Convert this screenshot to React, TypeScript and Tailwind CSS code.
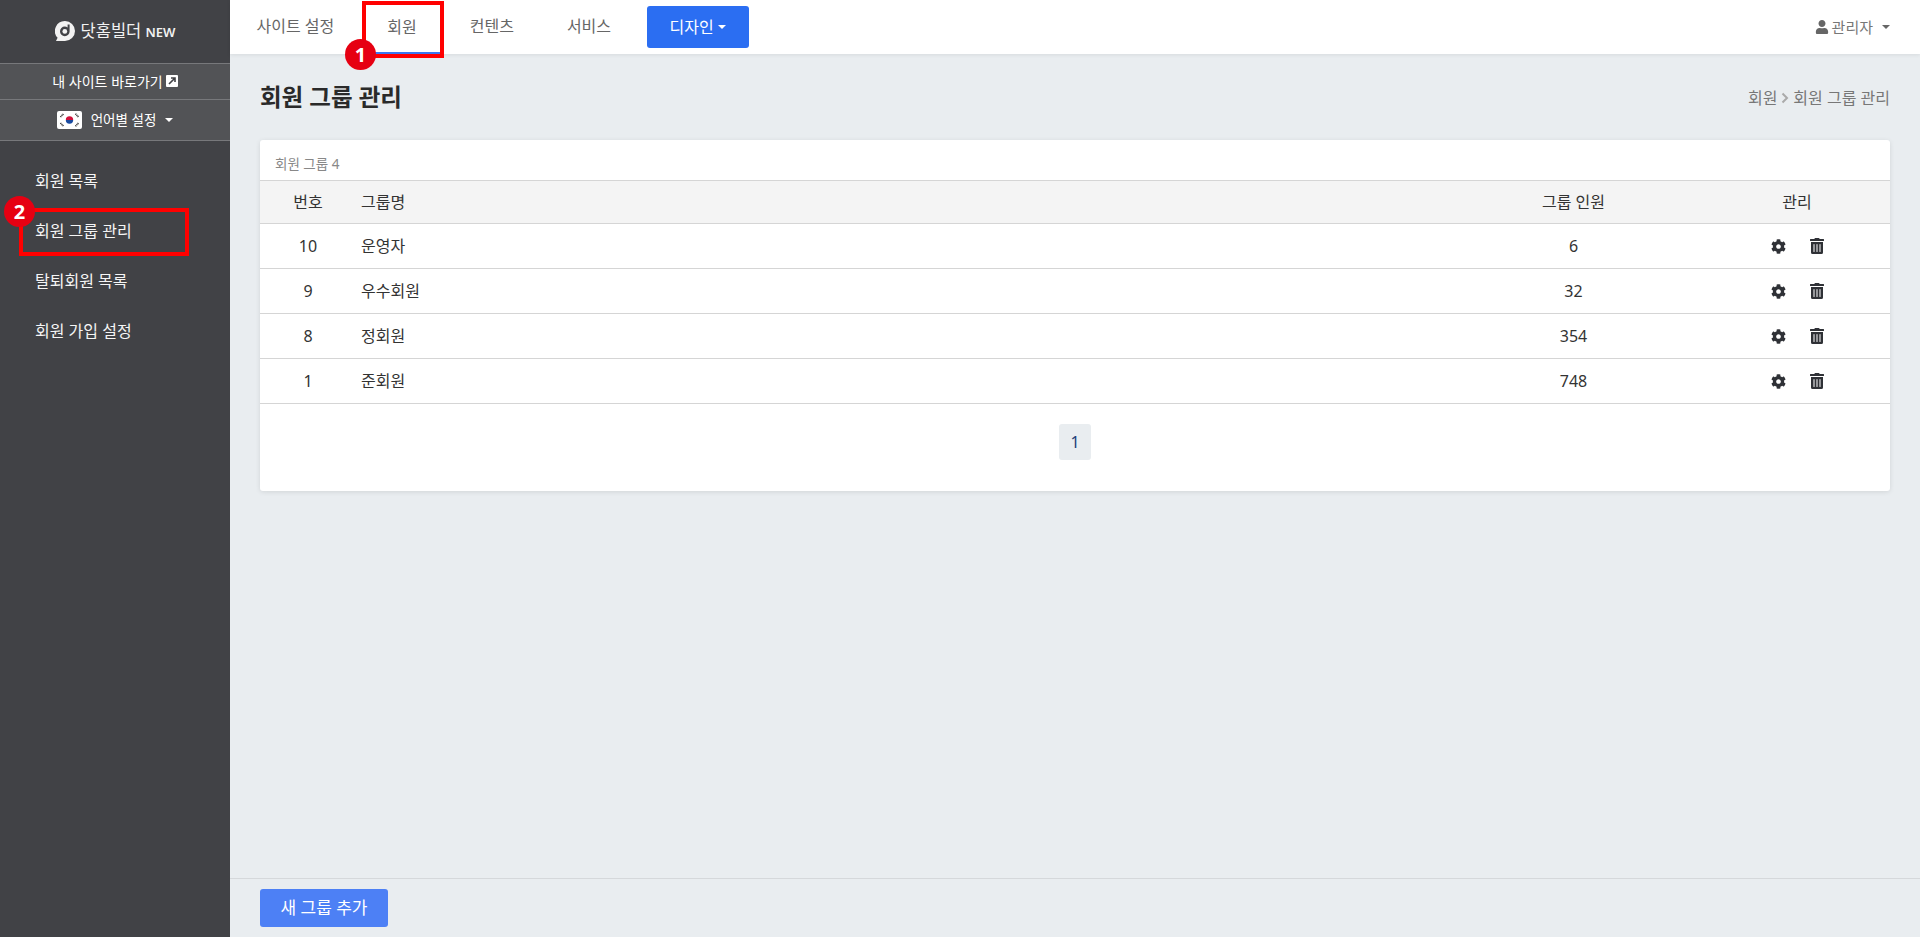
import { FaCog, FaTrashAlt, FaUser } from "react-icons/fa";

const groups = [
  { id: 10, name: "운영자", count: 6 },
  { id: 9, name: "우수회원", count: 32 },
  { id: 8, name: "정회원", count: 354 },
  { id: 1, name: "준회원", count: 748 },
];

const tabs = ["사이트 설정", "회원", "컨텐츠", "서비스"];
const sideMenu = ["회원 목록", "회원 그룹 관리", "탈퇴회원 목록", "회원 가입 설정"];

function Caret({ className }: { className: string }) {
  return <span className={`inline-block h-0 w-0 border-x-[4px] border-t-[4px] border-x-transparent ${className}`} />;
}

function KoreaFlag() {
  return (
    <svg width="25" height="18" viewBox="0 0 25 18">
      <rect width="25" height="18" rx="2" fill="#fff" />
      <path d="M8.800 9a3.700 3.700 0 0 1 7.400 0z" fill="#d0103a" />
      <path d="M8.800 9a3.700 3.700 0 0 0 7.400 0z" fill="#1a4ba0" />
      <g stroke="#222" strokeWidth="1.500" strokeDasharray="1 0.600">
        <path d="M3.500 6 6.500 2.800" />
        <path d="M18.500 2.800 21.500 6" />
        <path d="M3.500 12 6.500 15.200" />
        <path d="M18.500 15.200 21.500 12" />
      </g>
    </svg>
  );
}

function Logo() {
  return (
    <svg width="20" height="20" viewBox="0 0 20 20">
      <path d="M10 0a10 10 0 0 1 0 20H1l1.600-3.200A10 10 0 0 1 10 0z" fill="#f2f2f2" />
      <path d="M12.600 3.400h2v7a4.800 4.800 0 1 1-4.800-4.800c1 0 1.900.3 2.800.9z" fill="#414246" />
      <circle cx="9.800" cy="10.400" r="2.400" fill="#f2f2f2" />
    </svg>
  );
}

function Sidebar() {
  return (
    <aside className="flex w-[230px] shrink-0 flex-col bg-[#414246] text-white">
      <div className="flex h-[63px] items-center justify-center gap-[6px] pb-[1px]">
        <Logo />
        <span className="text-[16.5px] text-[#f2f2f2]">
          닷홈빌더 <span className="text-[13px] font-semibold">NEW</span>
        </span>
      </div>
      <div className="flex h-[37px] items-center justify-center gap-[3px] border-y border-[#77787b] bg-[#525356] pb-[1px] text-[14px]">
        내 사이트 바로가기
        <span className="flex h-[12px] w-[12px] items-center justify-center rounded-[1px] bg-white">
          <svg width="10" height="10" viewBox="0 0 10 10">
            <path d="M2 8 7.500 2.500M4 2h4v4" stroke="#414246" strokeWidth="1.600" fill="none" />
          </svg>
        </span>
      </div>
      <div className="flex h-[41px] items-center justify-center gap-[9px] border-b border-[#77787b] bg-[#525356] text-[13.5px]">
        <KoreaFlag />
        언어별 설정
        <Caret className="border-t-white" />
      </div>
      <nav className="flex flex-col pt-[15px]">
        {sideMenu.map((item) => (
          <a key={item} className="flex h-[50px] items-center pl-[35px] text-[16px] text-[#f5f5f5]">
            {item}
          </a>
        ))}
      </nav>
    </aside>
  );
}

function TopBar() {
  return (
    <header className="relative z-10 flex h-[54px] shrink-0 items-center bg-white pr-[30px] shadow-[0_1px_4px_rgba(0,0,0,0.08)]">
      <nav className="flex h-full items-center text-[16px] text-[#666]">
        {tabs.map((tab) => (
          <a
            key={tab}
            className={
              tab === "회원"
                ? "flex h-full items-center border-b-2 border-[#3b76f0] px-[26.5px] pt-[2px]"
                : "flex h-full items-center px-[26.5px] pb-[2px]"
            }
          >
            {tab}
          </a>
        ))}
      </nav>
      <button className="ml-[9px] flex h-[42px] w-[102px] items-center justify-center gap-[4px] rounded-[3px] bg-[#2b6ef2] text-[16px] text-white">
        디자인
        <Caret className="border-t-white" />
      </button>
      <div className="ml-auto flex items-center gap-[3px] text-[15px] text-[#777]">
        <FaUser className="h-[14px] w-[14px] text-[#666]" />
        관리자
        <Caret className="ml-[6px] border-t-[#666]" />
      </div>
    </header>
  );
}

function GroupTable() {
  return (
    <section className="mx-[30px] h-[351px] rounded-[3px] bg-white shadow-[0_1px_5px_rgba(0,0,0,0.1)]">
      <div className="flex h-[40px] items-end pb-[6px] pl-[15px] text-[13.5px] text-[#888]">회원 그룹 4</div>
      <table className="w-full table-fixed border-collapse text-[16px] text-[#333]">
        <thead>
          <tr className="h-[43px] border-y border-[#d5d5d5] bg-[#f4f4f4]">
            <th className="w-[96px] text-center font-normal">번호</th>
            <th className="pl-[5px] text-left font-normal">그룹명</th>
            <th className="w-[261px] text-center font-normal">그룹 인원</th>
            <th className="w-[186px] text-center font-normal">관리</th>
          </tr>
        </thead>
        <tbody>
          {groups.map((group) => (
            <tr key={group.id} className="h-[45px] border-b border-[#d5d5d5]">
              <td className="text-center">{group.id}</td>
              <td className="pl-[5px]">{group.name}</td>
              <td className="text-center">{group.count}</td>
              <td>
                <div className="flex items-center justify-center gap-[24px] text-[#2f3136]">
                  <FaCog className="h-[15px] w-[15px]" />
                  <FaTrashAlt className="h-[16px] w-[14px]" />
                </div>
              </td>
            </tr>
          ))}
        </tbody>
      </table>
      <div className="flex justify-center pt-[20px]">
        <a className="flex h-[36px] w-[32px] items-center justify-center rounded-[3px] bg-[#e9edf0] text-[16px] text-[#23407a]">1</a>
      </div>
    </section>
  );
}

export default function App() {
  return (
    <div className="relative flex h-screen overflow-hidden bg-[#e9edf0] font-['Noto_Sans','Noto_Sans_CJK_KR',sans-serif]">
      <Sidebar />
      <main className="flex min-w-0 flex-1 flex-col">
        <TopBar />
        <div className="flex h-[86px] shrink-0 items-center justify-between px-[30px] pt-[2px]">
          <h1 className="text-[23.5px] font-bold text-[#2a2a2a]">회원 그룹 관리</h1>
          <div className="flex items-center gap-[3px] text-[16px] text-[#777]">
            회원
            <svg width="10" height="12" viewBox="0 0 10 12">
              <path d="M2.500 1.500 7 6l-4.500 4.500" stroke="#aaa" strokeWidth="2" fill="none" />
            </svg>
            회원 그룹 관리
          </div>
        </div>
        <GroupTable />
        <footer className="mt-auto flex h-[59px] items-center border-t border-[#d5d8db] px-[30px]">
          <button className="h-[38px] w-[128px] rounded-[3px] bg-[#4d80f5] text-[17px] text-white">새 그룹 추가</button>
        </footer>
      </main>

      {/* 빨간 안내 표시 */}
      <div className="absolute left-[362px] top-[1px] z-20 h-[57px] w-[82px] border-[4px] border-[#ff0000]" />
      <div className="absolute left-[345px] top-[39px] z-20 flex h-[31px] w-[31px] items-center justify-center rounded-full bg-[#e60012] text-[20px] font-bold text-white">1</div>
      <div className="absolute left-[19px] top-[208px] z-20 h-[48px] w-[170px] border-[4px] border-[#ff0000]" />
      <div className="absolute left-[4px] top-[196px] z-20 flex h-[31px] w-[31px] items-center justify-center rounded-full bg-[#e60012] text-[20px] font-bold text-white">2</div>
    </div>
  );
}
